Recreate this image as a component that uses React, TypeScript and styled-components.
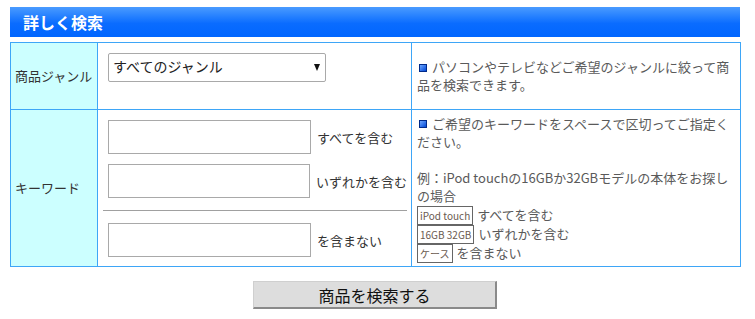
import styled, { createGlobalStyle } from 'styled-components'

const GlobalStyle = createGlobalStyle`
  body {
    margin: 0;
    background: #ffffff;
    font-family: "DejaVu Sans", "Noto Sans CJK JP", sans-serif;
  }
`

const Page = styled.div`
  width: 730px;
  padding: 7px 0 0 10px;
`

const Header = styled.div`
  height: 30px;
  background: linear-gradient(to bottom, #4a9bff 0%, #0a6cff 55%, #0066ff 100%);
  color: #ffffff;
  font-family: "Noto Sans CJK JP", sans-serif;
  font-weight: 700;
  font-size: 16px;
  line-height: 30px;
  padding-left: 13px;
`

const Table = styled.table`
  width: 731px;
  margin-top: 5px;
  border-collapse: collapse;
  table-layout: fixed;
  font-size: 13px;
`

const LabelCol = styled.col`
  width: 87px;
`

const FormCol = styled.col`
  width: 314px;
`

const LabelCell = styled.th`
  background: #ccffff;
  border: 1px solid #3ea6f7;
  font-weight: 400;
  color: #333333;
  text-align: left;
  padding: 0 0 0 4px;
  font-family: "Noto Sans CJK JP", sans-serif;
  line-height: 18px;
`

const FormCell = styled.td<{ $h: number }>`
  border: 1px solid #3ea6f7;
  vertical-align: top;
  padding: 10px 4px 9px 5px;
  height: ${(p) => p.$h}px;
  box-sizing: border-box;
`

const NoteCell = styled.td`
  border: 1px solid #3ea6f7;
  padding: 0 6px 0 5px;
  color: #5a5a5a;
  font-family: "Noto Sans CJK JP", sans-serif;
  line-height: 18px;
  vertical-align: middle;
`

const SelectWrap = styled.div`
  position: relative;
  width: 218px;
  margin-left: 5px;
`

const Select = styled.select`
  appearance: none;
  width: 218px;
  height: 29px;
  border: 1px solid #a9a9a9;
  border-radius: 2px;
  background: #ffffff;
  font-family: "DejaVu Sans", "Noto Sans CJK JP", sans-serif;
  font-size: 14px;
  color: #222222;
  padding: 0 0 2px 4px;
`

const Arrow = styled.span`
  position: absolute;
  right: 6px;
  top: 11px;
  width: 0;
  height: 0;
  border-left: 3.5px solid transparent;
  border-right: 3.5px solid transparent;
  border-top: 7px solid #111111;
  pointer-events: none;
`

const KeyRow = styled.div`
  display: flex;
  align-items: center;
  gap: 6px;
  padding-left: 5px;
  & + & {
    margin-top: 10px;
  }
`

const TextInput = styled.input`
  width: 203px;
  height: 34px;
  box-sizing: border-box;
  border: 1px solid #a9a9a9;
  margin: 0;
`

const KeyLabel = styled.span`
  color: #333333;
  font-family: "Noto Sans CJK JP", sans-serif;
  font-size: 13px;
  white-space: nowrap;
`

const Divider = styled.hr`
  border: 0;
  border-top: 1px solid #a0a0a0;
  margin: 12px 0 12px 0;
`

const Bullet = styled.span`
  display: inline-block;
  width: 6px;
  height: 6px;
  border: 1px solid #002a8a;
  background: linear-gradient(135deg, #6fa8ff, #0047d6);
  margin: 0 5px 1px 2px;
  vertical-align: middle;
`

const Line = styled.div`
  min-height: 18px;
`

const Sample = styled.span`
  display: inline-block;
  border: 1px solid #666666;
  font-size: 10px;
  line-height: 15px;
  padding: 1px 2px;
  color: #6a5a50;
  margin-right: 4px;
  vertical-align: middle;
`

const SampleLine = styled.div`
  line-height: 19px;
  height: 19px;
`

const Actions = styled.div`
  display: flex;
  justify-content: center;
  padding-top: 14px;
`

const Submit = styled.button`
  width: 244px;
  height: 28px;
  background: #dddddd;
  border: 1px solid #cfcfcf;
  border-right: 2px solid #8a8a8a;
  border-bottom: 2px solid #8a8a8a;
  font-family: "Noto Sans CJK JP", sans-serif;
  font-size: 16px;
  color: #111111;
  padding: 0;
  line-height: 24px;
`

const keywords = ['すべてを含む', 'いずれかを含む']

export default function App() {
  return (
    <Page>
      <GlobalStyle />
      <Header>詳しく検索</Header>
      <Table>
        <colgroup>
          <LabelCol />
          <FormCol />
          <col />
        </colgroup>
        <tbody>
          <tr>
            <LabelCell>商品ジャンル</LabelCell>
            <FormCell $h={67}>
              <SelectWrap>
                <Select defaultValue="all">
                  <option value="all">すべてのジャンル</option>
                </Select>
                <Arrow />
              </SelectWrap>
            </FormCell>
            <NoteCell>
              <Bullet />
              パソコンやテレビなどご希望のジャンルに絞って商品を検索できます。
            </NoteCell>
          </tr>
          <tr>
            <LabelCell>キーワード</LabelCell>
            <FormCell $h={156}>
              {keywords.map((k) => (
                <KeyRow key={k}>
                  <TextInput type="text" />
                  <KeyLabel>{k}</KeyLabel>
                </KeyRow>
              ))}
              <Divider />
              <KeyRow>
                <TextInput type="text" />
                <KeyLabel>を含まない</KeyLabel>
              </KeyRow>
            </FormCell>
            <NoteCell>
              <Line>
                <Bullet />
                ご希望のキーワードをスペースで区切ってご指定ください。
              </Line>
              <Line />
              <Line>例：iPod touchの16GBか32GBモデルの本体をお探しの場合</Line>
              <SampleLine>
                <Sample>iPod touch</Sample>すべてを含む
              </SampleLine>
              <SampleLine>
                <Sample>16GB 32GB</Sample>いずれかを含む
              </SampleLine>
              <SampleLine>
                <Sample>ケース</Sample>を含まない
              </SampleLine>
            </NoteCell>
          </tr>
        </tbody>
      </Table>
      <Actions>
        <Submit type="button">商品を検索する</Submit>
      </Actions>
    </Page>
  )
}
